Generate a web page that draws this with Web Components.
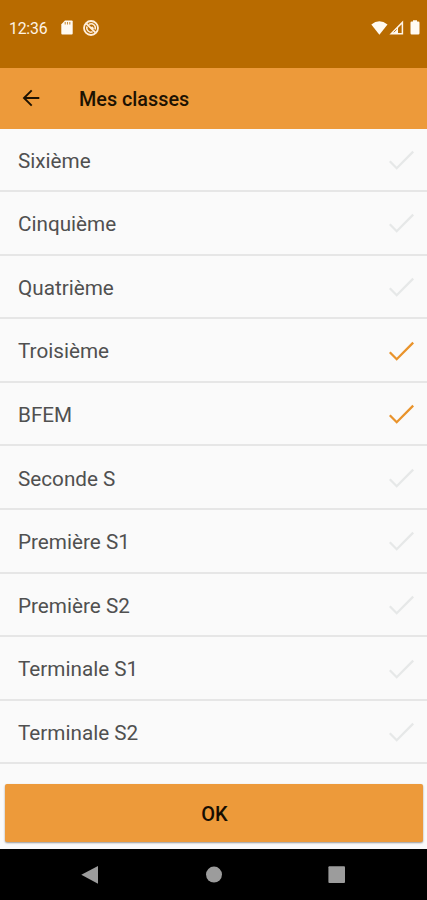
<!DOCTYPE html>
<html lang="fr">
<head>
<meta charset="UTF-8">
<meta name="viewport" content="width=device-width, initial-scale=1.0">
<title>Mes classes</title>
<style>
  body {
    margin: 0;
    font-family: Roboto, sans-serif;
    background: #fafafa;
    --primary: #ed9a3a;
    --primary-dark: #b86b00;
  }
</style>
</head>
<body>
<class-screen></class-screen>

<script>
class StatusBar extends HTMLElement {
  connectedCallback() {
    this.attachShadow({ mode: 'open' });
    this.shadowRoot.innerHTML = `
      <style>
        :host {
          display: flex;
          align-items: center;
          flex: none;
          height: 68px;
          box-sizing: border-box;
          padding: 0 7px 13px 9px;
          background: var(--primary-dark);
          color: #fff4e6;
          font-size: 15.8px;
        }
        span { letter-spacing: -0.2px; padding-top: 1px; }
        svg { display: block; fill: #fffaf2; }
        .sd { margin-left: 14px; }
        .sync { margin-left: 10px; }
        .wifi { margin-left: auto; }
        .signal { margin-left: 1px; }
        .battery { margin-left: 6px; }
      </style>
      <span><slot></slot></span>
      <svg class="sd" width="12" height="15" viewBox="0 0 12 15">
        <path d="M4 .5h6.7q1 0 1 1v12q0 1-1 1H1.3q-1 0-1-1V4.2z"/>
        <path d="M4.2 2v2.5M6.5 2v2.5M8.8 2v2.5" stroke="#c98d3c" stroke-width="1.1"/>
      </svg>
      <svg class="sync" width="16" height="16" viewBox="0 0 16 16">
        <g fill="none" stroke="#ffeedb" stroke-width="1.8">
          <circle cx="8" cy="8" r="7"/>
          <path d="M3.3 3.5l9.2 9.2"/>
          <path d="M6 4.3a4.2 4.2 0 0 1 6 5.2M4 6.6a4.2 4.2 0 0 0 5.6 5.2" stroke-width="1.5"/>
          <path d="M8.2 7.2l2 2" stroke-width="2.6"/>
        </g>
      </svg>
      <svg class="wifi" width="17" height="14" viewBox="0 0 17 14">
        <path d="M.3 3.6Q8.3-3 16.5 3.6L8.4 13.7z"/>
      </svg>
      <svg class="signal" width="15" height="15" viewBox="0 0 15 15">
        <path d="M2.2 13.7L13.4 2.4v11.3z" style="fill: none" stroke="#fff4e6" stroke-width="1.5"/>
        <path d="M2.2 13.7L9 6.8v6.9z"/>
        <path d="M4.8 12.3l3-3" stroke="#b86b00" stroke-width=".9"/>
      </svg>
      <svg class="battery" width="10" height="15" viewBox="0 0 10 15">
        <path d="M3 .2h4v1.4h1.3q1.2 0 1.2 1.2v10.5q0 1.2-1.2 1.2H1.7q-1.2 0-1.2-1.2V2.8q0-1.2 1.2-1.2H3z"/>
      </svg>
    `;
  }
}

class AppBar extends HTMLElement {
  connectedCallback() {
    this.attachShadow({ mode: 'open' });
    this.shadowRoot.innerHTML = `
      <style>
        :host {
          display: flex;
          align-items: center;
          flex: none;
          height: 60.5px;
          box-sizing: border-box;
          padding: 1px 22px 0;
          gap: 39px;
          background: var(--primary);
          color: #1d1202;
        }
        svg { display: block; margin-top: -1px; }
        h1 { margin: 0; padding-top: 2px; font-size: 19.8px; font-weight: 500; }
      </style>
      <svg width="18" height="18" viewBox="0 0 18 18" fill="none" stroke="#1d1202" stroke-width="1.9">
        <path d="M17.3 9H2.2M9.7 1.4L2 9l7.7 7.6"/>
      </svg>
      <h1><slot></slot></h1>
    `;
  }
}

class ClassRow extends HTMLElement {
  connectedCallback() {
    this.attachShadow({ mode: 'open' });
    this.shadowRoot.innerHTML = `
      <style>
        :host {
          display: flex;
          align-items: center;
          justify-content: space-between;
          flex: none;
          height: 63.6px;
          box-sizing: border-box;
          padding: 0 13px 0 18px;
          border-bottom: 2px solid #e6e6e6;
          color: #505050;
          font-size: 20.7px;
        }
        span { padding-top: 2.6px; }
        svg { display: block; margin-top: 1px; stroke: #e6e8e8; }
        :host([checked]) svg { stroke: #e9932b; }
      </style>
      <span><slot></slot></span>
      <svg width="26" height="20" viewBox="0 0 26 20" fill="none" stroke-width="2.3">
        <path d="M1.8 11.2l6.9 7L25.2 1.6"/>
      </svg>
    `;
  }
}

class OkButton extends HTMLElement {
  connectedCallback() {
    this.attachShadow({ mode: 'open' });
    this.shadowRoot.innerHTML = `
      <style>
        :host { display: flex; flex: none; padding: 0 4px 7px 5px; }
        button {
          flex: 1;
          height: 58px;
          padding: 2px 0 0 1px;
          border: 0;
          border-radius: 2px;
          background: var(--primary);
          box-shadow: 0 1px 2px rgba(0, 0, 0, 0.4);
          color: #170e02;
          font: 500 20px Roboto, sans-serif;
        }
      </style>
      <button><slot></slot></button>
    `;
  }
}

class NavBar extends HTMLElement {
  connectedCallback() {
    this.attachShadow({ mode: 'open' });
    this.shadowRoot.innerHTML = `
      <style>
        :host {
          display: flex;
          align-items: center;
          justify-content: space-between;
          flex: none;
          height: 51px;
          box-sizing: border-box;
          padding: 0 81px;
          background: #000;
        }
        svg { display: block; fill: #9c9c9c; }
      </style>
      <svg width="18" height="18" viewBox="0 0 18 18"><path d="M.3 8.7L17 0v17.7z"/></svg>
      <svg width="18" height="18" viewBox="0 0 18 18"><circle cx="9" cy="8.6" r="8"/></svg>
      <svg width="18" height="18" viewBox="0 0 18 18"><rect x=".4" y=".3" width="16.6" height="16.6" rx="1"/></svg>
    `;
  }
}

class ClassScreen extends HTMLElement {
  connectedCallback() {
    this.attachShadow({ mode: 'open' });
    this.shadowRoot.innerHTML = `
      <style>
        :host {
          display: flex;
          flex-direction: column;
          height: 900px;
          overflow: hidden;
        }
        main { flex: 1; min-height: 0; overflow: hidden; }
      </style>
      <status-bar>12:36</status-bar>
      <app-bar>Mes classes</app-bar>
      <main>
        <class-row>Sixième</class-row>
        <class-row>Cinquième</class-row>
        <class-row>Quatrième</class-row>
        <class-row checked>Troisième</class-row>
        <class-row checked>BFEM</class-row>
        <class-row>Seconde S</class-row>
        <class-row>Première S1</class-row>
        <class-row>Première S2</class-row>
        <class-row>Terminale S1</class-row>
        <class-row>Terminale S2</class-row>
      </main>
      <ok-button>OK</ok-button>
      <nav-bar></nav-bar>
    `;
  }
}

customElements.define('status-bar', StatusBar);
customElements.define('app-bar', AppBar);
customElements.define('class-row', ClassRow);
customElements.define('ok-button', OkButton);
customElements.define('nav-bar', NavBar);
customElements.define('class-screen', ClassScreen);
</script>
</body>
</html>
